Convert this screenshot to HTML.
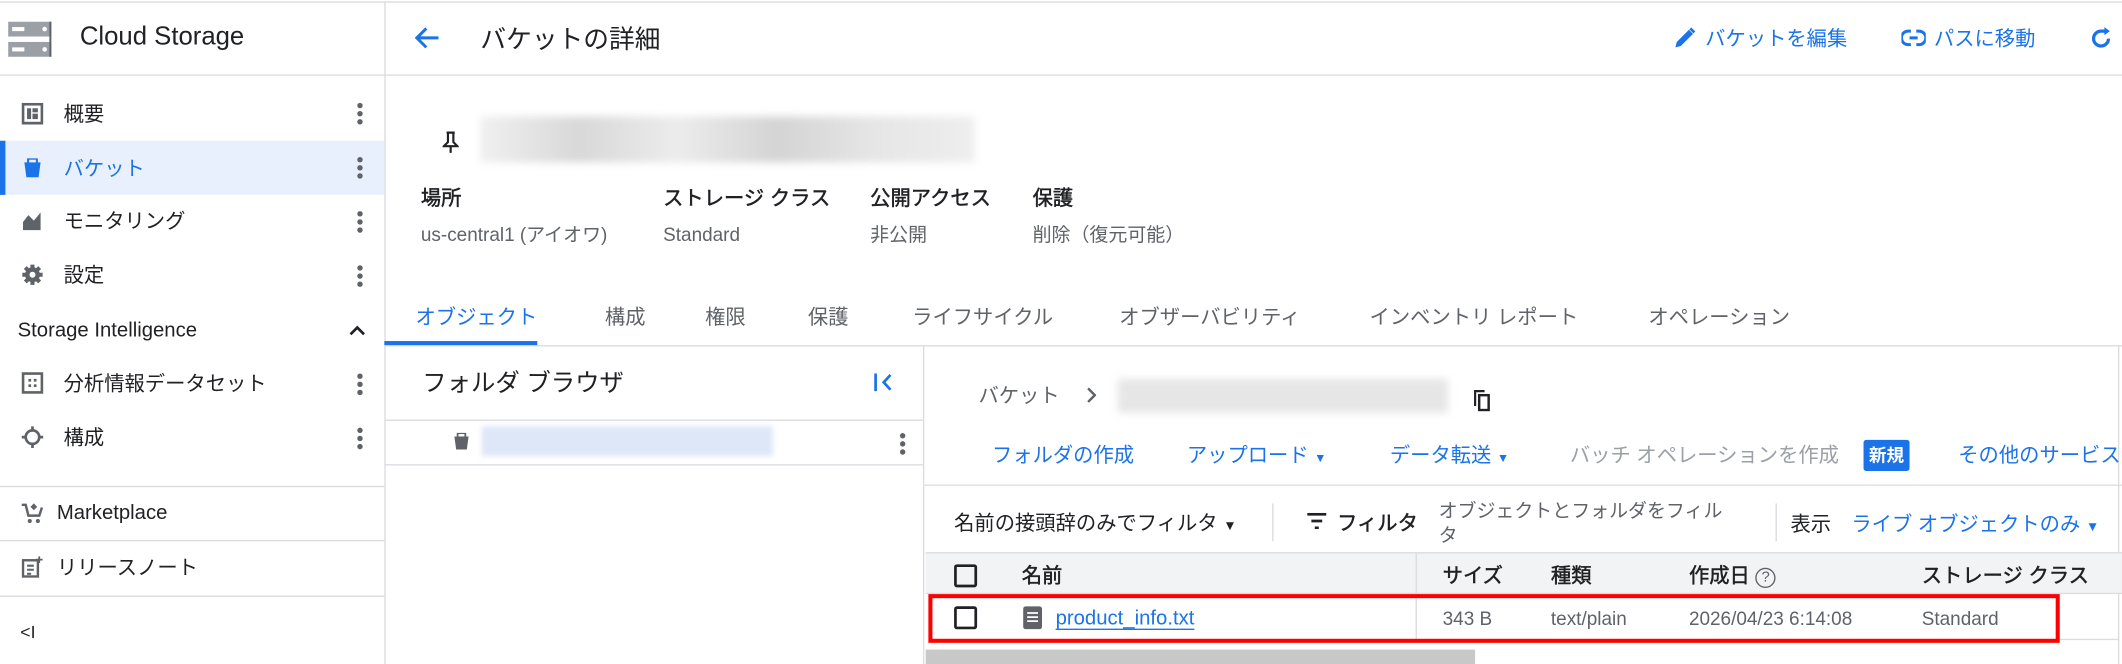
<!DOCTYPE html>
<html><head><meta charset="utf-8"><style>
*{box-sizing:border-box;margin:0;padding:0}
html,body{width:2122px;height:664px;overflow:hidden;background:#fff}
#w{position:absolute;left:0;top:0;width:1568px;height:491px;transform:scale(1.35332);transform-origin:0 0;font-family:"Liberation Sans","Noto Sans CJK JP",sans-serif;color:#202124;font-size:14px}
.a{position:absolute;white-space:nowrap}
.hl{position:absolute;background:#dadce0}
.k{position:absolute;width:4px}
.k i{display:block;width:4px;height:4px;border-radius:2px;background:#5f6368;margin-bottom:2px}
.g{color:#5f6368}
.b{color:#1a73e8}
.v{transform:translateY(-50%)}
.m{font-weight:normal;color:#202124;-webkit-text-stroke:0.35px #202124}
</style></head><body><div id="w">
<div class="hl" style="left:0;top:1px;width:1568px;height:1px"></div>
<!-- sidebar -->
<div class="hl" style="left:284px;top:1px;width:1px;height:490px"></div>
<div class="hl" style="left:0;top:55px;width:1568px;height:1px"></div>
<svg class="a" style="left:6px;top:16px" width="32" height="26" viewBox="0 0 32 26"><rect x="0" y="0" width="32" height="11" fill="#9aa0a6"/><rect x="0" y="15" width="32" height="11" fill="#9aa0a6"/><rect x="3" y="4" width="9" height="3" fill="#fff"/><rect x="3" y="19" width="9" height="3" fill="#fff"/><circle cx="27" cy="5.5" r="1.7" fill="#fff"/><circle cx="27" cy="20.5" r="1.7" fill="#fff"/><rect x="30.5" y="0" width="1.5" height="26" fill="#5f6368"/></svg>
<div class="a v" style="left:59px;top:28px;font-size:19px">Cloud Storage</div>

<svg class="a" style="left:16px;top:76px" width="16" height="16" viewBox="0 0 16 16"><rect x="1" y="1" width="14" height="14" fill="none" stroke="#5f6368" stroke-width="2"/><rect x="4" y="4" width="3" height="8" fill="#5f6368"/><rect x="8" y="4" width="4" height="3" fill="#5f6368"/><rect x="8" y="8" width="4" height="4" fill="#5f6368"/></svg>
<div class="a v" style="left:47px;top:84px;font-size:15px">概要</div>
<div class="k" style="left:264px;top:76px"><i></i><i></i><i></i></div>

<div class="a" style="left:0;top:104px;width:284px;height:40px;background:#e8f0fe"></div>
<div class="a" style="left:0;top:104px;width:4px;height:40px;background:#1a73e8"></div>
<svg class="a" style="left:16px;top:116px" width="16" height="16" viewBox="0 0 16 16"><path d="M4 1h8v3h2l-1.5 11h-9L2 4h2z" fill="#1a73e8"/><rect x="5.5" y="2" width="5" height="2" fill="#e8f0fe"/></svg>
<div class="a v b" style="left:47px;top:124px;font-size:15px">バケット</div>
<div class="k" style="left:264px;top:116px"><i></i><i></i><i></i></div>

<svg class="a" style="left:16px;top:155px" width="16" height="16" viewBox="0 0 16 16"><path d="M1 15V9l4-5 4 4 5-6v13z" fill="#5f6368"/></svg>
<div class="a v" style="left:47px;top:163px;font-size:15px">モニタリング</div>
<div class="k" style="left:264px;top:156px"><i></i><i></i><i></i></div>

<svg class="a" style="left:16px;top:195px" width="16" height="16" viewBox="0 0 16 16"><circle cx="8" cy="8" r="5.5" fill="#5f6368"/><path d="M8 0.5v15M0.5 8h15M2.7 2.7l10.6 10.6M13.3 2.7L2.7 13.3" stroke="#5f6368" stroke-width="3"/><circle cx="8" cy="8" r="2.2" fill="#fff"/></svg>
<div class="a v" style="left:47px;top:203px;font-size:15px">設定</div>
<div class="k" style="left:264px;top:196px"><i></i><i></i><i></i></div>

<div class="a v" style="left:13px;top:244px;font-size:15px">Storage Intelligence</div>
<svg class="a" style="left:258px;top:240px" width="12" height="8" viewBox="0 0 12 8"><path d="M1 7l5-5 5 5" fill="none" stroke="#202124" stroke-width="2"/></svg>

<svg class="a" style="left:16px;top:275px" width="16" height="16" viewBox="0 0 16 16"><rect x="1" y="1" width="14" height="14" fill="none" stroke="#5f6368" stroke-width="2"/><rect x="5" y="5" width="2" height="2" fill="#5f6368"/><rect x="9" y="5" width="2" height="2" fill="#5f6368"/><rect x="5" y="9" width="2" height="2" fill="#5f6368"/><rect x="9" y="9" width="2" height="2" fill="#5f6368"/></svg>
<div class="a v" style="left:47px;top:283px;font-size:15px">分析情報データセット</div>
<div class="k" style="left:264px;top:276px"><i></i><i></i><i></i></div>

<svg class="a" style="left:16px;top:315px" width="16" height="16" viewBox="0 0 16 16"><circle cx="8" cy="8" r="5" fill="none" stroke="#5f6368" stroke-width="2"/><path d="M8 0v3M8 13v3M0 8h3M13 8h3" stroke="#5f6368" stroke-width="2"/></svg>
<div class="a v" style="left:47px;top:323px;font-size:15px">構成</div>
<div class="k" style="left:264px;top:316px"><i></i><i></i><i></i></div>

<div class="hl" style="left:0;top:359px;width:284px;height:1px"></div>
<svg class="a" style="left:16px;top:371px" width="16" height="16" viewBox="0 0 16 16"><path d="M0 2h3l2 8h8l2-6" fill="none" stroke="#5f6368" stroke-width="1.8"/><circle cx="6" cy="14" r="1.5" fill="#5f6368"/><circle cx="12" cy="14" r="1.5" fill="#5f6368"/><path d="M9 1l2.5 2.5L9 6 6.5 3.5z" fill="#5f6368"/></svg>
<div class="a v" style="left:42px;top:379px;font-size:15px">Marketplace</div>
<div class="hl" style="left:0;top:399px;width:284px;height:1px"></div>
<svg class="a" style="left:16px;top:411px" width="16" height="16" viewBox="0 0 16 16"><rect x="1" y="3" width="11" height="12" fill="none" stroke="#5f6368" stroke-width="1.8"/><path d="M4 7h5M4 10h5M4 13h3" stroke="#5f6368" stroke-width="1.5"/><path d="M13 0v5M10.5 2.5h5" stroke="#5f6368" stroke-width="1.3"/></svg>
<div class="a v" style="left:42px;top:419px;font-size:15px">リリースノート</div>
<div class="hl" style="left:0;top:440px;width:284px;height:1px"></div>
<div class="a v" style="left:15px;top:467px;font-size:13px">&lt;I</div>

<!-- header -->
<svg class="a" style="left:305px;top:19px" width="20" height="18" viewBox="0 0 20 18"><path d="M19 9H3M10 2L3 9l7 7" fill="none" stroke="#1a73e8" stroke-width="2.2"/></svg>
<div class="a v" style="left:355px;top:28px;font-size:19px">バケットの詳細</div>
<svg class="a" style="left:1237px;top:20px" width="16" height="16" viewBox="0 0 16 16"><path d="M1 15l1-4 9-9 3 3-9 9z" fill="#1a73e8"/><path d="M12 1l3 3" stroke="#1a73e8" stroke-width="2"/></svg>
<div class="a v b" style="left:1260px;top:28px;font-size:15px">バケットを編集</div>
<svg class="a" style="left:1405px;top:21px" width="18" height="14" viewBox="0 0 18 14"><path d="M7 2H5a5 5 0 000 10h2M11 2h2a5 5 0 010 10h-2M6 7h6" fill="none" stroke="#1a73e8" stroke-width="2.2"/></svg>
<div class="a v b" style="left:1429px;top:28px;font-size:15px">パスに移動</div>
<svg class="a" style="left:1544px;top:20px" width="17" height="17" viewBox="0 0 17 17"><path d="M14 8.5A5.5 5.5 0 118.5 3H13" fill="none" stroke="#1a73e8" stroke-width="2.4"/><path d="M11 0l4 3-4 3z" fill="#1a73e8"/></svg>

<!-- bucket info -->
<svg class="a" style="left:327px;top:97px" width="12" height="17" viewBox="0 0 12 17"><path d="M3 1h6M4 1v7L1 11h10L8 8V1M6 11v5" fill="none" stroke="#202124" stroke-width="1.6"/></svg>
<div class="a" style="left:355px;top:86px;width:365px;height:34px;background:linear-gradient(90deg,#f0f0f0,#d8d8d8 20%,#ececec 40%,#d4d4d4 60%,#e6e6e6 80%,#eee);filter:blur(3px)"></div>
<div class="a v m" style="left:311px;top:146px;font-size:15px">場所</div>
<div class="a v m" style="left:490px;top:146px;font-size:15px">ストレージ クラス</div>
<div class="a v m" style="left:643px;top:146px;font-size:15px">公開アクセス</div>
<div class="a v m" style="left:763px;top:146px;font-size:15px">保護</div>
<div class="a v g" style="left:311px;top:173px;font-size:14px">us-central1 (アイオワ)</div>
<div class="a v g" style="left:490px;top:173px;font-size:14px">Standard</div>
<div class="a v g" style="left:643px;top:173px;font-size:14px">非公開</div>
<div class="a v g" style="left:763px;top:173px;font-size:14px">削除（復元可能）</div>

<!-- tabs -->
<div class="a v b" style="left:307px;top:234px;font-size:15px">オブジェクト</div>
<div class="a v g" style="left:447px;top:234px;font-size:15px">構成</div>
<div class="a v g" style="left:521px;top:234px;font-size:15px">権限</div>
<div class="a v g" style="left:597px;top:234px;font-size:15px">保護</div>
<div class="a v g" style="left:674px;top:234px;font-size:15px">ライフサイクル</div>
<div class="a v g" style="left:827px;top:234px;font-size:15px">オブザーバビリティ</div>
<div class="a v g" style="left:1012px;top:234px;font-size:15px">インベントリ レポート</div>
<div class="a v g" style="left:1218px;top:234px;font-size:15px">オペレーション</div>
<div class="hl" style="left:284px;top:255px;width:1284px;height:1px"></div>
<div class="a" style="left:284px;top:252px;width:113px;height:3px;background:#1a73e8"></div>

<!-- folder browser -->
<div class="hl" style="left:682px;top:255px;width:1px;height:236px"></div>
<div class="hl" style="left:1565px;top:255px;width:1px;height:236px"></div>
<div class="a v" style="left:312px;top:282px;font-size:18px">フォルダ ブラウザ</div>
<svg class="a" style="left:645px;top:275px" width="16" height="15" viewBox="0 0 16 15"><path d="M2 1v13" stroke="#1a73e8" stroke-width="2"/><path d="M13 2L8 7.5l5 5.5" fill="none" stroke="#1a73e8" stroke-width="2"/></svg>
<div class="hl" style="left:284px;top:310px;width:398px;height:1px"></div>
<svg class="a" style="left:334px;top:319px" width="14" height="14" viewBox="0 0 16 16"><path d="M4 1h8v3h2l-1.5 11h-9L2 4h2z" fill="#5f6368"/><rect x="5.5" y="2" width="5" height="2" fill="#fff"/></svg>
<div class="a" style="left:356px;top:315px;width:215px;height:22px;background:#dde7f7;filter:blur(2px)"></div>
<div class="k" style="left:665px;top:320px"><i></i><i></i><i></i></div>
<div class="hl" style="left:284px;top:343px;width:398px;height:1px"></div>

<!-- object panel -->
<div class="a v g" style="left:723px;top:292px;font-size:15px">バケット</div>
<svg class="a" style="left:803px;top:286px" width="7" height="12" viewBox="0 0 7 12"><path d="M1 1l5 5-5 5" fill="none" stroke="#5f6368" stroke-width="1.8"/></svg>
<div class="a" style="left:826px;top:280px;width:244px;height:25px;background:#e6e6e6;filter:blur(3px)"></div>
<svg class="a" style="left:1089px;top:288px" width="12" height="16" viewBox="0 0 12 16"><path d="M1 12V1h7" fill="none" stroke="#202124" stroke-width="1.6"/><rect x="4" y="4" width="7" height="11" fill="none" stroke="#202124" stroke-width="1.8"/></svg>
<div class="a v b" style="left:733px;top:336px;font-size:15px">フォルダの作成</div>
<div class="a v b" style="left:877px;top:336px;font-size:15px">アップロード <span style="font-size:9px">▼</span></div>
<div class="a v b" style="left:1027px;top:336px;font-size:15px">データ転送 <span style="font-size:9px">▼</span></div>
<div class="a v" style="left:1160px;top:336px;font-size:15px;color:#9aa0a6">バッチ オペレーションを作成</div>
<div class="a" style="left:1377px;top:325px;width:34px;height:23px;background:#1a73e8;color:#fff;font-size:13px;font-weight:bold;text-align:center;line-height:23px;border-radius:2px">新規</div>
<div class="a v b" style="left:1447px;top:336px;font-size:15px">その他のサービス</div>
<div class="hl" style="left:683px;top:358px;width:885px;height:1px"></div>

<div class="a v" style="left:705px;top:386px;font-size:15px">名前の接頭辞のみでフィルタ <span style="font-size:10px">▼</span></div>
<div class="hl" style="left:940px;top:372px;width:1px;height:28px"></div>
<svg class="a" style="left:965px;top:379px" width="16" height="12" viewBox="0 0 16 12"><path d="M1 1h14M4 6h8M6.5 11h3" stroke="#202124" stroke-width="2"/></svg>
<div class="a v m" style="left:988px;top:386px;font-size:15px">フィルタ</div>
<div class="a g" style="left:1063px;top:368px;font-size:14px;line-height:18px">オブジェクトとフォルダをフィル<br>タ</div>
<div class="hl" style="left:1312px;top:372px;width:1px;height:28px"></div>
<div class="a v" style="left:1323px;top:387px;font-size:15px">表示</div>
<div class="a v b" style="left:1368px;top:387px;font-size:15px">ライブ オブジェクトのみ <span style="font-size:10px">▼</span></div>

<div class="a" style="left:684px;top:408px;width:884px;height:31px;background:#f1f3f4;border-top:1px solid #dadce0;border-bottom:1px solid #dadce0"></div>
<div class="hl" style="left:1046px;top:408px;width:1px;height:66px"></div>
<div class="a" style="left:705px;top:417px;width:17px;height:17px;border:2px solid #202124;border-radius:2px"></div>
<div class="a v m" style="left:755px;top:425px;font-size:15px">名前</div>
<div class="a v m" style="left:1066px;top:425px;font-size:15px">サイズ</div>
<div class="a v m" style="left:1146px;top:425px;font-size:15px">種類</div>
<div class="a v m" style="left:1248px;top:425px;font-size:15px">作成日 <span style="display:inline-block;width:15px;height:15px;border:1.5px solid #5f6368;border-radius:50%;font-size:11px;text-align:center;line-height:12px;color:#5f6368;-webkit-text-stroke:0;vertical-align:1px">?</span></div>
<div class="a v m" style="left:1420px;top:425px;font-size:15px">ストレージ クラス</div>

<div class="a" style="left:705px;top:448px;width:17px;height:17px;border:2px solid #202124;border-radius:2px"></div>
<svg class="a" style="left:756px;top:448px" width="14" height="17" viewBox="0 0 14 17"><rect x="0" y="0" width="14" height="17" rx="2" fill="#5f6368"/><path d="M3 5h8M3 8h8M3 11h8" stroke="#fff" stroke-width="1.3"/></svg>
<div class="a v b" style="left:780px;top:457px;font-size:15px;text-decoration:underline;text-underline-offset:3px">product_info.txt</div>
<div class="a v g" style="left:1066px;top:457px;font-size:14px">343 B</div>
<div class="a v g" style="left:1146px;top:457px;font-size:14px">text/plain</div>
<div class="a v g" style="left:1248px;top:457px;font-size:14px">2026/04/23 6:14:08</div>
<div class="a v g" style="left:1420px;top:457px;font-size:14px">Standard</div>
<div class="hl" style="left:1521px;top:472px;width:44px;height:1px"></div>
<div class="a" style="left:686px;top:439px;width:836px;height:36px;border:3px solid #f00"></div>
<div class="a" style="left:684px;top:480px;width:406px;height:11px;background:#c8c8c8"></div>
</div></body></html>
